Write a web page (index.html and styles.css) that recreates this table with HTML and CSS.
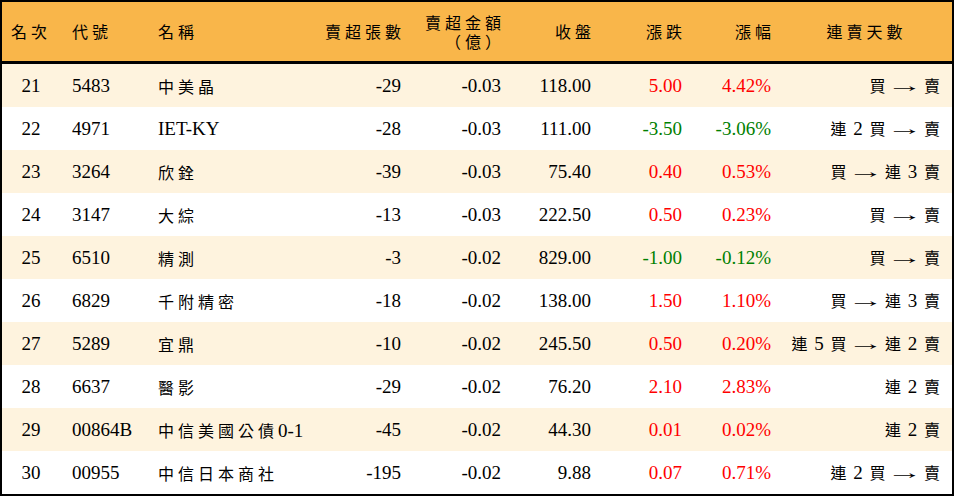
FILE: index.html
```html
<!DOCTYPE html>
<html lang="zh-Hant">
<head>
<meta charset="utf-8">
<link rel="stylesheet" href="styles.css">
</head>
<body>
<div class="board">
  <div class="row head">
    <div class="c c1">名次</div>
    <div class="c cl">代號</div>
    <div class="c cl">名稱</div>
    <div class="c cr">賣超張數</div>
    <div class="c cr two"><div class="ln">賣超金額</div><div class="ln">（億）</div></div>
    <div class="c cr">收盤</div>
    <div class="c cr">漲跌</div>
    <div class="c cr">漲幅</div>
    <div class="c cc">連賣天數</div>
  </div>

  <div class="row alt">
    <div class="c c1">21</div><div class="c cl">5483</div><div class="c cl"><span class="zh">中美晶</span></div>
    <div class="c cr">-29</div><div class="c cr">-0.03</div><div class="c cr">118.00</div>
    <div class="c cr up">5.00</div><div class="c cr up">4.42%</div>
    <div class="c cs"><span class="zh">買</span> <span class="arr">→</span> <span class="zh">賣</span></div>
  </div>
  <div class="row">
    <div class="c c1">22</div><div class="c cl">4971</div><div class="c cl">IET-KY</div>
    <div class="c cr">-28</div><div class="c cr">-0.03</div><div class="c cr">111.00</div>
    <div class="c cr dn">-3.50</div><div class="c cr dn">-3.06%</div>
    <div class="c cs"><span class="zh">連</span> 2 <span class="zh">買</span> <span class="arr">→</span> <span class="zh">賣</span></div>
  </div>
  <div class="row alt">
    <div class="c c1">23</div><div class="c cl">3264</div><div class="c cl"><span class="zh">欣銓</span></div>
    <div class="c cr">-39</div><div class="c cr">-0.03</div><div class="c cr">75.40</div>
    <div class="c cr up">0.40</div><div class="c cr up">0.53%</div>
    <div class="c cs"><span class="zh">買</span> <span class="arr">→</span> <span class="zh">連</span> 3 <span class="zh">賣</span></div>
  </div>
  <div class="row">
    <div class="c c1">24</div><div class="c cl">3147</div><div class="c cl"><span class="zh">大綜</span></div>
    <div class="c cr">-13</div><div class="c cr">-0.03</div><div class="c cr">222.50</div>
    <div class="c cr up">0.50</div><div class="c cr up">0.23%</div>
    <div class="c cs"><span class="zh">買</span> <span class="arr">→</span> <span class="zh">賣</span></div>
  </div>
  <div class="row alt">
    <div class="c c1">25</div><div class="c cl">6510</div><div class="c cl"><span class="zh">精測</span></div>
    <div class="c cr">-3</div><div class="c cr">-0.02</div><div class="c cr">829.00</div>
    <div class="c cr dn">-1.00</div><div class="c cr dn">-0.12%</div>
    <div class="c cs"><span class="zh">買</span> <span class="arr">→</span> <span class="zh">賣</span></div>
  </div>
  <div class="row">
    <div class="c c1">26</div><div class="c cl">6829</div><div class="c cl"><span class="zh">千附精密</span></div>
    <div class="c cr">-18</div><div class="c cr">-0.02</div><div class="c cr">138.00</div>
    <div class="c cr up">1.50</div><div class="c cr up">1.10%</div>
    <div class="c cs"><span class="zh">買</span> <span class="arr">→</span> <span class="zh">連</span> 3 <span class="zh">賣</span></div>
  </div>
  <div class="row alt">
    <div class="c c1">27</div><div class="c cl">5289</div><div class="c cl"><span class="zh">宜鼎</span></div>
    <div class="c cr">-10</div><div class="c cr">-0.02</div><div class="c cr">245.50</div>
    <div class="c cr up">0.50</div><div class="c cr up">0.20%</div>
    <div class="c cs"><span class="zh">連</span> 5 <span class="zh">買</span> <span class="arr">→</span> <span class="zh">連</span> 2 <span class="zh">賣</span></div>
  </div>
  <div class="row">
    <div class="c c1">28</div><div class="c cl">6637</div><div class="c cl"><span class="zh">醫影</span></div>
    <div class="c cr">-29</div><div class="c cr">-0.02</div><div class="c cr">76.20</div>
    <div class="c cr up">2.10</div><div class="c cr up">2.83%</div>
    <div class="c cs"><span class="zh">連</span> 2 <span class="zh">賣</span></div>
  </div>
  <div class="row alt">
    <div class="c c1">29</div><div class="c cl">00864B</div><div class="c cl"><span class="zh">中信美國公債</span>0-1</div>
    <div class="c cr">-45</div><div class="c cr">-0.02</div><div class="c cr">44.30</div>
    <div class="c cr up">0.01</div><div class="c cr up">0.02%</div>
    <div class="c cs"><span class="zh">連</span> 2 <span class="zh">賣</span></div>
  </div>
  <div class="row">
    <div class="c c1">30</div><div class="c cl">00955</div><div class="c cl"><span class="zh">中信日本商社</span></div>
    <div class="c cr">-195</div><div class="c cr">-0.02</div><div class="c cr">9.88</div>
    <div class="c cr up">0.07</div><div class="c cr up">0.71%</div>
    <div class="c cs"><span class="zh">連</span> 2 <span class="zh">買</span> <span class="arr">→</span> <span class="zh">賣</span></div>
  </div>
</div>
</body>
</html>
```
FILE: styles.css
```css
html, body {
  margin: 0;
  padding: 0;
  background: #ffffff;
}
.board {
  box-sizing: border-box;
  width: 954px;
  height: 496px;
  border: 2px solid #000;
  background: #ffffff;
  font-family: "Liberation Serif", "Noto Sans CJK TC", serif;
  font-size: 19px;
  color: #000;
}
.row {
  display: grid;
  grid-template-columns: 58px 86px 174px 91px 100px 90px 91px 89px 171px;
  height: 43px;
  align-items: center;
  white-space: nowrap;
}
.row.alt {
  background: #fef3de;
}
.row.head {
  height: 59px;
  border-bottom: 3px solid #000;
  background: #f9b64a;
  font-family: "Noto Sans CJK TC", sans-serif;
  font-size: 16px;
  line-height: 19px;
  letter-spacing: 4px;
}
.ln {
  height: 19px;
  line-height: 19px;
}
.zh {
  font-family: "Noto Sans CJK TC", sans-serif;
  font-size: 16px;
  letter-spacing: 4px;
}
.c1 {
  text-align: center;
}
.cl {
  text-align: left;
  padding-left: 12px;
}
.cr {
  text-align: right;
  padding-right: 10px;
}
.head .cr {
  padding-right: 6px;
}
.cc {
  text-align: center;
}
.cs {
  text-align: right;
  padding-right: 12px;
  line-height: 20px;
  word-spacing: 2px;
}
.cs .zh {
  letter-spacing: 0;
}
.arr {
  display: inline-block;
  font-family: "Liberation Serif", serif;
  transform: scaleX(1.9);
  margin: 0 3px;
}
.up {
  color: #ff0000;
}
.dn {
  color: #008000;
}
```
